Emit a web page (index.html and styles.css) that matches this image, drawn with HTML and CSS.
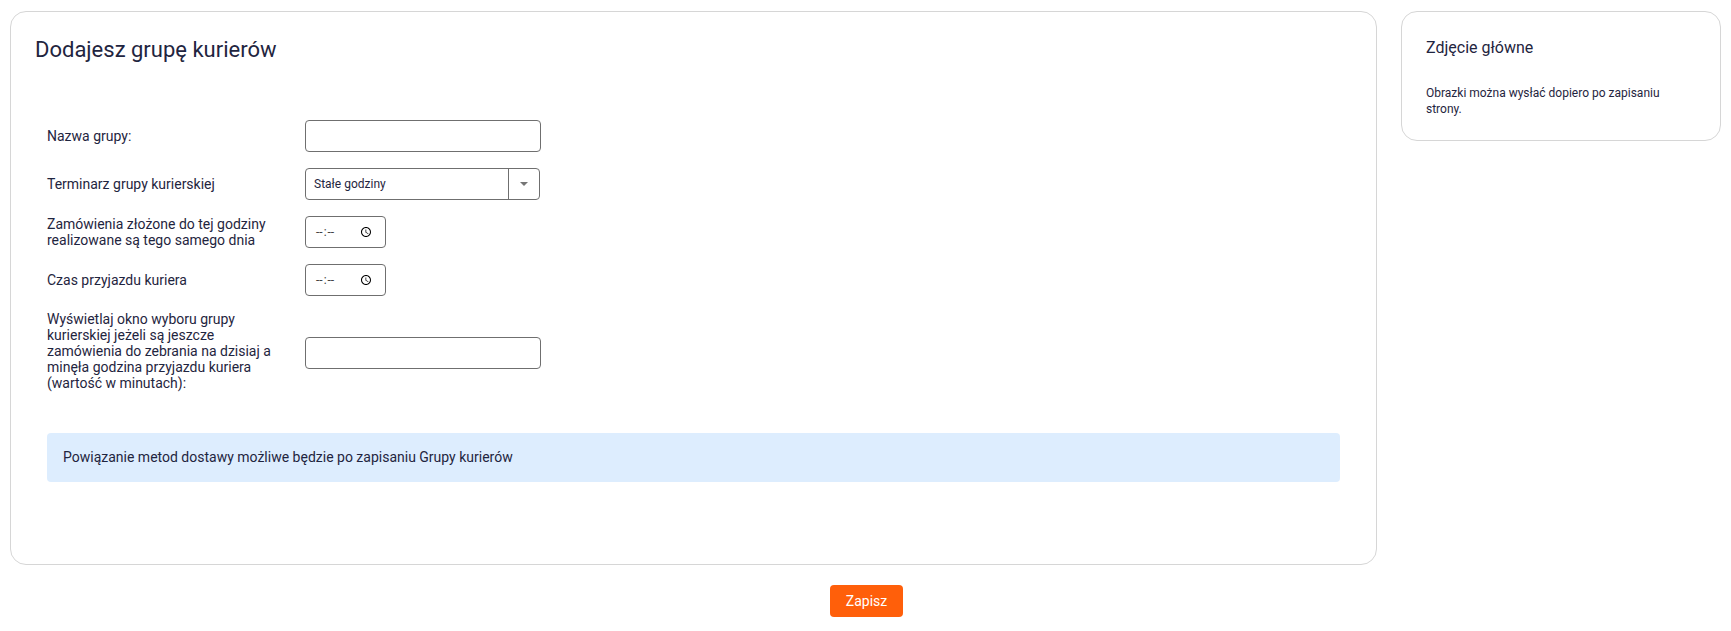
FILE: index.html
```html
<!DOCTYPE html>
<html lang="pl">

<head>
  <meta charset="UTF-8">
  <title>Dodajesz grupę kurierów</title>
  <link rel="stylesheet" href="styles.css">
</head>

<body>
  <form class="page">
    <div class="columns">
      <section class="card main-card">
        <h1>Dodajesz grupę kurierów</h1>

        <div class="form-rows">
          <div class="form-row">
            <label for="groupName">Nazwa grupy:</label>
            <input type="text" id="groupName" class="text-input">
          </div>

          <div class="form-row">
            <label>Terminarz grupy kurierskiej</label>
            <div class="dropdown">
              <span class="dropdown-value">Stałe godziny</span>
              <span class="dropdown-btn"><span class="caret"></span></span>
            </div>
          </div>

          <div class="form-row">
            <label for="cutoffTime">Zamówienia złożone do tej godziny realizowane są tego samego dnia</label>
            <input type="time" id="cutoffTime" class="time-input">
          </div>

          <div class="form-row">
            <label for="arrivalTime">Czas przyjazdu kuriera</label>
            <input type="time" id="arrivalTime" class="time-input">
          </div>

          <div class="form-row tall-row">
            <label for="minutes">Wyświetlaj okno wyboru grupy kurierskiej jeżeli są jeszcze zamówienia do zebrania na dzisiaj a minęła godzina przyjazdu kuriera (wartość w minutach):</label>
            <input type="text" id="minutes" class="text-input">
          </div>
        </div>

        <div class="info-box">Powiązanie metod dostawy możliwe będzie po zapisaniu Grupy kurierów</div>
      </section>

      <aside class="card side-card">
        <h2>Zdjęcie główne</h2>
        <p>Obrazki można wysłać dopiero po zapisaniu strony.</p>
      </aside>
    </div>

    <div class="actions">
      <button type="button" class="save-btn">Zapisz</button>
    </div>
  </form>
</body>

</html>
```

FILE: styles.css
```css
* {
  box-sizing: border-box;
}

body {
  margin: 0;
  background: #fff;
  color: #1f2540;
  font-family: Roboto, "Liberation Sans", sans-serif;
  font-size: 14px;
}

.page {
  padding: 11px 10px 0;
}

.columns {
  display: flex;
  align-items: flex-start;
  gap: 24px;
}

.card {
  background: #fff;
  border: 1px solid #d6d6d6;
  border-radius: 16px;
}

.main-card {
  width: 1367px;
  height: 554px;
  padding: 24px 36px 0;
}

.side-card {
  width: 320px;
  height: 130px;
  padding: 26px 24px 0;
}

h1 {
  margin: 0 0 0 -12px;
  font-size: 22px;
  font-weight: 400;
  line-height: 28px;
}

h2 {
  margin: 0;
  font-size: 16px;
  font-weight: 400;
  line-height: 20px;
}

.side-card p {
  margin: 27px 0 0;
  font-size: 12px;
  line-height: 16px;
}

.form-rows {
  display: flex;
  flex-direction: column;
  gap: 16px;
  margin-top: 56px;
}

.form-row {
  display: grid;
  grid-template-columns: 258px auto;
  justify-content: start;
  align-items: center;
}

.form-row label {
  padding-right: 24px;
  line-height: 16px;
}

.tall-row {
  min-height: 81px;
}

.tall-row label {
  margin-top: -3px;
}

.text-input {
  width: 236px;
  height: 32px;
  padding: 0 8px;
  background: #fff;
  border: 1px solid #6f6f6f;
  border-radius: 4px;
}

.time-input {
  width: 81px;
  height: 32px;
  padding: 0 9px;
  background: #fff;
  border: 1px solid #6f6f6f;
  border-radius: 4px;
  color: #444;
  font-family: Roboto, "Liberation Sans", sans-serif;
  font-size: 12px;
}

.time-input::-webkit-datetime-edit-ampm-field {
  display: none;
}

.dropdown {
  display: flex;
  width: 235px;
  height: 32px;
  border: 1px solid #6f6f6f;
  border-radius: 4px;
  font-size: 12px;
}

.dropdown-value {
  flex: 1;
  padding-left: 8px;
  line-height: 30px;
}

.dropdown-btn {
  display: flex;
  align-items: center;
  justify-content: center;
  width: 31px;
  border-left: 1px solid #6f6f6f;
}

.caret {
  border-top: 4px solid #757575;
  border-left: 4px solid transparent;
  border-right: 4px solid transparent;
}

.info-box {
  margin-top: 40px;
  padding: 16px;
  background: #ddedfe;
  border-radius: 4px;
  line-height: 17px;
}

.actions {
  display: flex;
  justify-content: center;
  margin-top: 20px;
  padding-left: 2px;
}

.save-btn {
  width: 73px;
  height: 32px;
  padding: 0;
  background: #ff5f0a;
  border: none;
  border-radius: 4px;
  color: #fff;
  font-family: Roboto, "Liberation Sans", sans-serif;
  font-size: 14px;
}
```
